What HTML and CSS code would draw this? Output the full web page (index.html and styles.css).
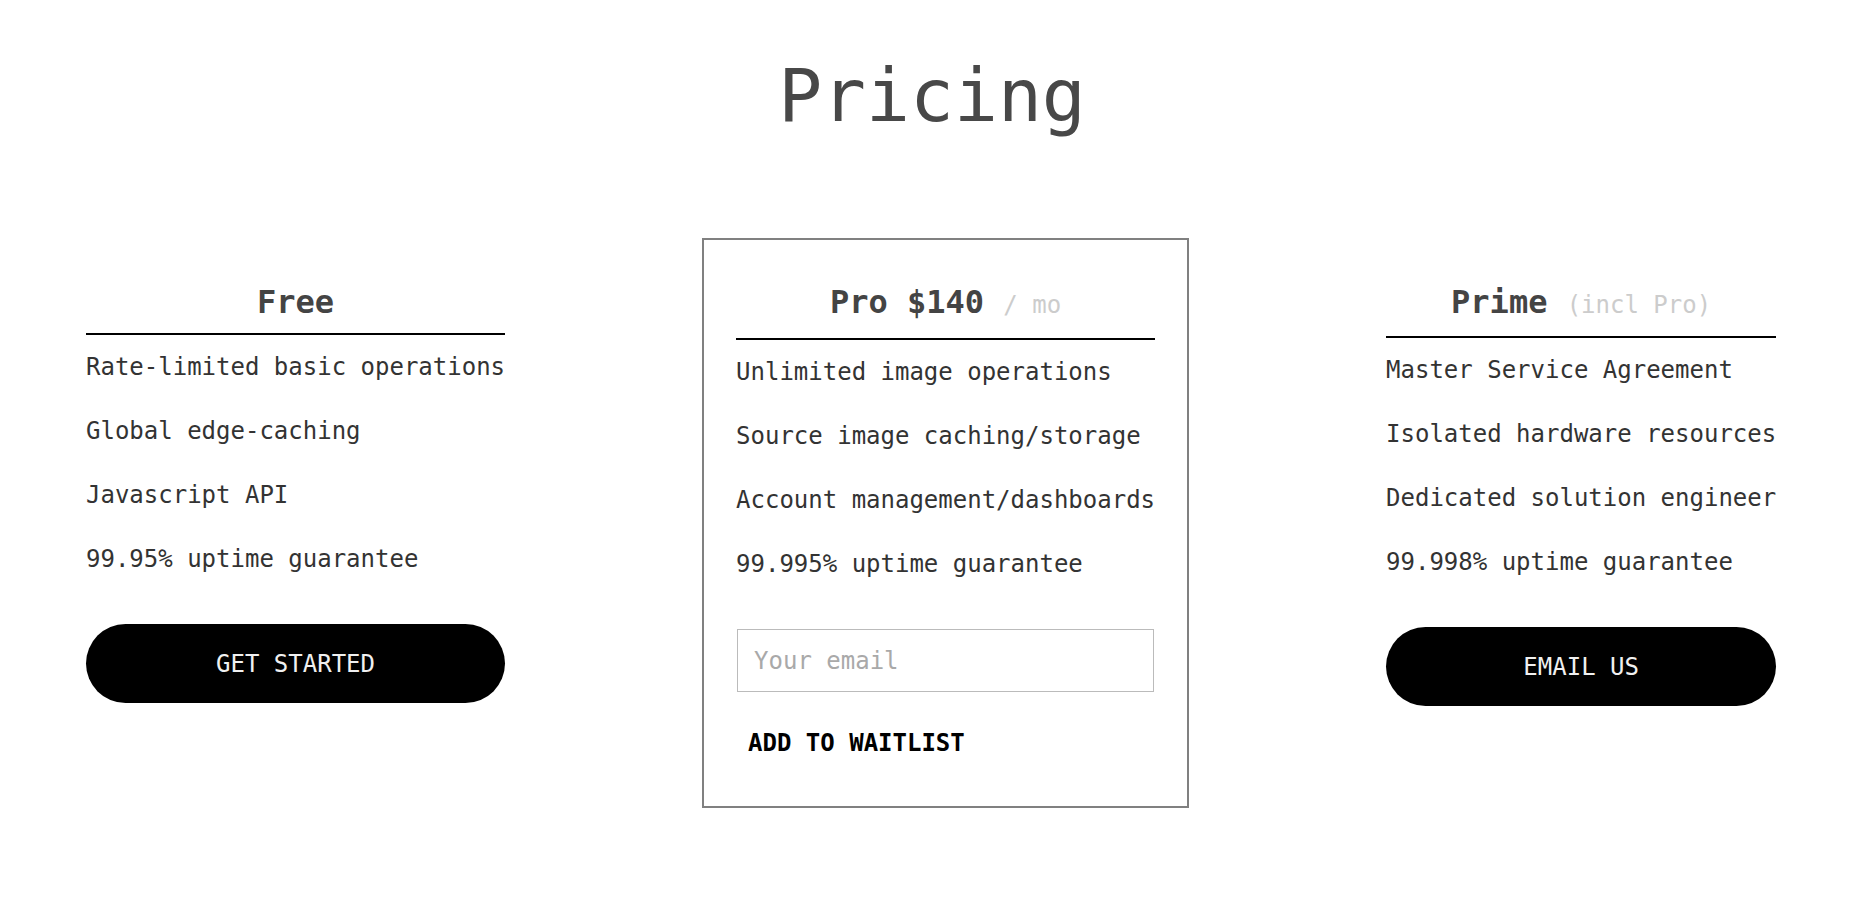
FILE: index.html
```html
<!DOCTYPE html>
<html lang="en">
<head>
<meta charset="utf-8">
<title>Pricing</title>
<link rel="stylesheet" href="styles.css">
</head>
<body>
<main class="page">
  <h1 class="title">Pricing</h1>
  <section class="plans">
    <div class="plan">
      <h2 class="plan-name">Free</h2>
      <ul class="features">
        <li>Rate-limited basic operations</li>
        <li>Global edge-caching</li>
        <li>Javascript API</li>
        <li>99.95% uptime guarantee</li>
      </ul>
      <button class="pill" type="button">GET STARTED</button>
    </div>
    <div class="plan plan-featured">
      <h2 class="plan-name plan-name-pro">Pro $140 <span class="muted">/ mo</span></h2>
      <ul class="features">
        <li>Unlimited image operations</li>
        <li>Source image caching/storage</li>
        <li>Account management/dashboards</li>
        <li>99.995% uptime guarantee</li>
      </ul>
      <form class="waitlist">
        <input class="email" type="email" placeholder="Your email">
        <button class="text-btn" type="button">ADD TO WAITLIST</button>
      </form>
    </div>
    <div class="plan">
      <h2 class="plan-name">Prime <span class="muted">(incl Pro)</span></h2>
      <ul class="features">
        <li>Master Service Agreement</li>
        <li>Isolated hardware resources</li>
        <li>Dedicated solution engineer</li>
        <li>99.998% uptime guarantee</li>
      </ul>
      <button class="pill" type="button">EMAIL US</button>
    </div>
  </section>
</main>
</body>
</html>
```

FILE: styles.css
```css
html, body {
  margin: 0;
  padding: 0;
  background: #ffffff;
}

body {
  font-family: "DejaVu Sans Mono", "Liberation Mono", monospace;
  color: #333333;
}

.page {
  display: flex;
  flex-direction: column;
}

.title {
  align-self: center;
  margin: 0;
  padding-top: 54px;
  font-size: 73px;
  font-weight: normal;
  line-height: 84px;
  color: #484848;
}

.plans {
  display: flex;
  justify-content: flex-start;
  align-items: flex-start;
  gap: 163px;
  margin-top: 100px;
  padding-left: 52px;
}

.plan {
  display: flex;
  flex-direction: column;
  padding: 32px;
  border: 2px solid transparent;
}

.plan-featured {
  border-color: #808080;
}

.plan-name {
  margin: 0;
  padding-bottom: 1px;
  border-bottom: 2px solid #000000;
  font-size: 32px;
  line-height: 60px;
  font-weight: bold;
  color: #444444;
  text-align: center;
  white-space: nowrap;
}

.plan-name-pro {
  padding-bottom: 3px;
}

.muted {
  font-size: 24px;
  font-weight: normal;
  color: #cccccc;
}

.features {
  list-style: none;
  margin: 0;
  padding: 0;
}

.features li {
  font-size: 24px;
  line-height: 64px;
  white-space: nowrap;
}

.pill {
  margin-top: 33px;
  height: 79px;
  border: none;
  border-radius: 40px;
  background: #000000;
  color: #f0f0f0;
  font-family: inherit;
  font-size: 24px;
  cursor: pointer;
}

.waitlist {
  display: flex;
  flex-direction: column;
  margin: 33px 0 0 0;
}

.email {
  box-sizing: border-box;
  margin: 0 1px;
  height: 63px;
  padding: 0 16px;
  border: 1px solid #bbbbbb;
  font-family: inherit;
  font-size: 24px;
  color: #333333;
  outline: none;
}

.email::placeholder {
  color: #a9a9a9;
}

.text-btn {
  align-self: flex-start;
  margin-top: 19px;
  height: 63px;
  padding: 0 12px;
  border: none;
  background: transparent;
  color: #000000;
  font-family: inherit;
  font-size: 24px;
  font-weight: bold;
  cursor: pointer;
}
```
